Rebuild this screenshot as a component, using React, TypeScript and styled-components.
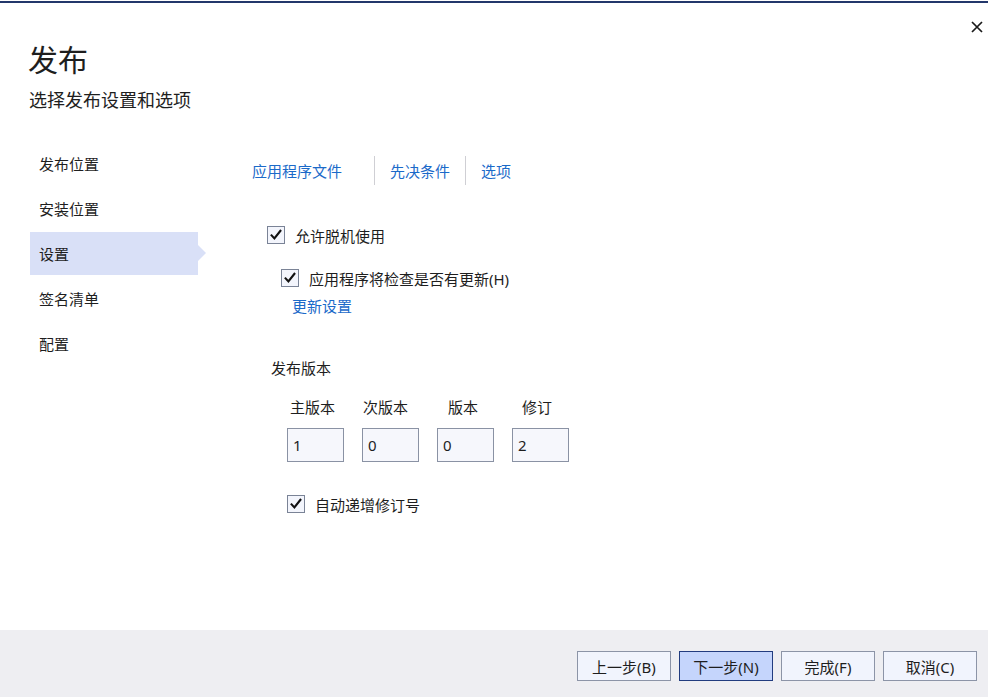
import React from "react";
import styled, { createGlobalStyle } from "styled-components";

const Global = createGlobalStyle`
  html, body { margin: 0; padding: 0; background: #ffffff; }
  body {
    font-family: "Noto Sans", "Noto Sans CJK SC", sans-serif;
    color: #1e1e1e;
    -webkit-font-smoothing: antialiased;
  }
  * { box-sizing: border-box; }
`;

const Page = styled.div`
  width: 988px;
  height: 697px;
  display: flex;
  flex-direction: column;
  position: relative;
  overflow: hidden;
  background: #ffffff;
`;

const TopLine = styled.div`
  height: 3px;
  border-top: 1px solid #ffffff;
  background: #23376b;
`;

const Header = styled.header`
  padding: 39px 0 0 28px;
  display: flex;
  flex-direction: column;
  gap: 9px;
`;

const Title = styled.h1`
  margin: 0;
  font-size: 30px;
  font-weight: 400;
  line-height: 36px;
  color: #1e1e1e;
`;

const Subtitle = styled.div`
  font-size: 18px;
  line-height: 26px;
  color: #1e1e1e;
  padding-left: 1px;
`;

const CloseButton = styled.button`
  position: absolute;
  top: 19px;
  right: 3px;
  width: 16px;
  height: 16px;
  padding: 0;
  border: none;
  background: transparent;
  display: flex;
  align-items: center;
  justify-content: center;
`;

const Body = styled.div`
  flex: 1;
  display: flex;
  padding-top: 29px;
`;

const Sidebar = styled.nav`
  margin-left: 30px;
  width: 168px;
  display: flex;
  flex-direction: column;
  gap: 2px;
`;

const NavItem = styled.div<{ $active?: boolean }>`
  position: relative;
  height: 43px;
  display: flex;
  align-items: center;
  padding-left: 9px;
  font-size: 15px;
  color: #1e1e1e;
  background: ${(p) => (p.$active ? "#d9e0f7" : "transparent")};
  &::after {
    content: "";
    display: ${(p) => (p.$active ? "block" : "none")};
    position: absolute;
    right: -8px;
    top: 50%;
    margin-top: -8.5px;
    border-top: 8.5px solid transparent;
    border-bottom: 8.5px solid transparent;
    border-left: 8px solid #d9e0f7;
  }
`;

const Content = styled.main`
  margin-left: 54px;
  padding-top: 14px;
  display: flex;
  flex-direction: column;
`;

const Tabs = styled.div`
  display: flex;
  align-items: stretch;
  height: 29px;
`;

const Tab = styled.a<{ $first?: boolean }>`
  display: flex;
  align-items: center;
  padding: ${(p) => (p.$first ? "0 32px 0 0" : "0 15px")};
  font-size: 15px;
  color: #1b6ac9;
  text-decoration: none;
  cursor: pointer;
`;

const TabSep = styled.span`
  width: 1px;
  background: #cfcfd4;
`;

const CheckRow = styled.label<{ $indent: number; $top: number }>`
  display: flex;
  align-items: center;
  gap: 10px;
  height: 18px;
  margin-left: ${(p) => p.$indent}px;
  margin-top: ${(p) => p.$top}px;
  font-size: 15px;
  color: #1e1e1e;
`;

const Box = styled.span`
  width: 18px;
  height: 18px;
  border: 1px solid #7a8396;
  background: #f3f5fc;
  display: flex;
  align-items: center;
  justify-content: center;
  flex-shrink: 0;
`;

const LinkText = styled.a<{ $indent: number; $top: number }>`
  display: block;
  margin-left: ${(p) => p.$indent}px;
  margin-top: ${(p) => p.$top}px;
  font-size: 15px;
  line-height: 20px;
  color: #1b6ac9;
  text-decoration: none;
  cursor: pointer;
`;

const SectionLabel = styled.div`
  margin-left: 19px;
  margin-top: 42px;
  font-size: 15px;
  line-height: 20px;
  color: #1e1e1e;
`;

const VersionGrid = styled.div`
  margin-left: 35px;
  margin-top: 19px;
  display: grid;
  grid-template-columns: repeat(4, 57px);
  column-gap: 18px;
  row-gap: 11px;
`;

const VersionLabel = styled.div<{ $offset: number }>`
  font-size: 15px;
  line-height: 20px;
  padding-left: ${(p) => p.$offset}px;
  white-space: nowrap;
  color: #1e1e1e;
`;

const VersionInput = styled.input`
  width: 57px;
  height: 34px;
  border: 1px solid #8a92a4;
  background: #f6f7fc;
  padding: 0 0 0 5px;
  font-family: "Noto Sans", "Noto Sans CJK SC", sans-serif;
  font-size: 15px;
  color: #1e1e1e;
  outline: none;
`;

const Footer = styled.footer`
  height: 67px;
  background: #eeeef2;
  display: flex;
  justify-content: flex-end;
  align-items: flex-start;
  padding: 21px 11px 0 0;
  gap: 8px;
`;

const Button = styled.button<{ $primary?: boolean }>`
  width: 94px;
  height: 30px;
  border: 1px solid ${(p) => (p.$primary ? "#223c7f" : "#8c94a7")};
  background: ${(p) => (p.$primary ? "#c5d5fc" : "#f1f4fd")};
  font-family: "Noto Sans", "Noto Sans CJK SC", sans-serif;
  font-size: 15px;
  color: #1e1e1e;
  padding: 0;
  cursor: pointer;
`;

const Check = () => (
  <svg width="12" height="12" viewBox="0 0 12 12">
    <path d="M1.6 6.4 L4.4 9.4 L10.4 1.8" fill="none" stroke="#111" strokeWidth="2.1" strokeLinecap="square" strokeLinejoin="miter" />
  </svg>
);

const navItems = ["发布位置", "安装位置", "设置", "签名清单", "配置"];
const versions = [
  { label: "主版本", value: "1", offset: 3 },
  { label: "次版本", value: "0", offset: 1 },
  { label: "版本", value: "0", offset: 11 },
  { label: "修订", value: "2", offset: 10 },
];

export default function App() {
  return (
    <Page>
      <Global />
      <TopLine />
      <CloseButton aria-label="关闭">
        <svg width="12" height="12" viewBox="0 0 12 12">
          <path d="M1 1 L11 11 M11 1 L1 11" stroke="#1a1a1a" strokeWidth="1.7" />
        </svg>
      </CloseButton>
      <Header>
        <Title>发布</Title>
        <Subtitle>选择发布设置和选项</Subtitle>
      </Header>
      <Body>
        <Sidebar>
          {navItems.map((n) => (
            <NavItem key={n} $active={n === "设置"}>
              {n}
            </NavItem>
          ))}
        </Sidebar>
        <Content>
          <Tabs>
            <Tab $first>应用程序文件</Tab>
            <TabSep />
            <Tab>先决条件</Tab>
            <TabSep />
            <Tab>选项</Tab>
          </Tabs>
          <CheckRow $indent={15} $top={41}>
            <Box>
              <Check />
            </Box>
            允许脱机使用
          </CheckRow>
          <CheckRow $indent={29} $top={25}>
            <Box>
              <Check />
            </Box>
            应用程序将检查是否有更新(H)
          </CheckRow>
          <LinkText $indent={40} $top={9}>
            更新设置
          </LinkText>
          <SectionLabel>发布版本</SectionLabel>
          <VersionGrid>
            {versions.map((v) => (
              <VersionLabel key={v.label} $offset={v.offset}>
                {v.label}
              </VersionLabel>
            ))}
            {versions.map((v) => (
              <VersionInput key={v.label + "i"} defaultValue={v.value} />
            ))}
          </VersionGrid>
          <CheckRow $indent={35} $top={33}>
            <Box>
              <Check />
            </Box>
            自动递增修订号
          </CheckRow>
        </Content>
      </Body>
      <Footer>
        <Button>上一步(B)</Button>
        <Button $primary>下一步(N)</Button>
        <Button>完成(F)</Button>
        <Button>取消(C)</Button>
      </Footer>
    </Page>
  );
}
